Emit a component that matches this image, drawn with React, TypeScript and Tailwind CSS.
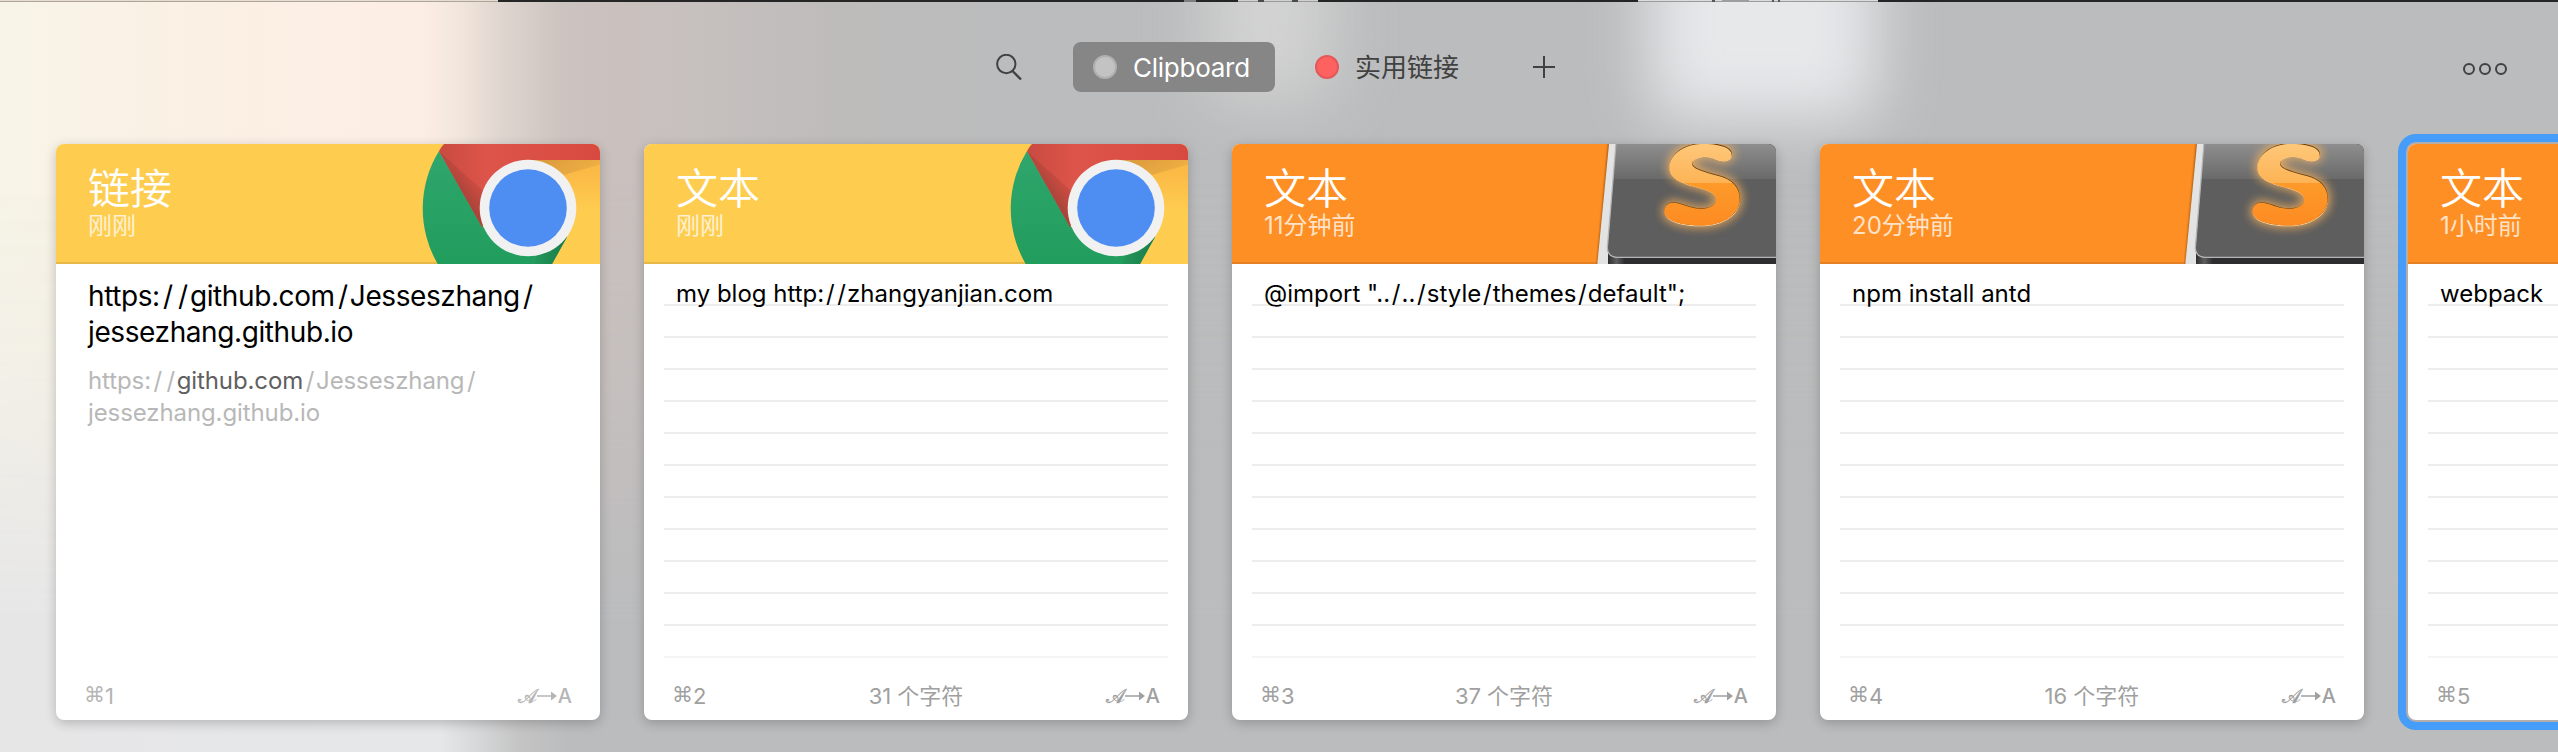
import React from "react";

type Source = "chrome" | "sublime";

interface Clip {
  kind: string;
  time: string;
  app: Source;
  text: string;
  count?: string;
  link?: boolean;
  selected?: boolean;
}

const clips: Clip[] = [
  { kind: "链接", time: "刚刚", app: "chrome", text: "", link: true },
  { kind: "文本", time: "刚刚", app: "chrome", text: "my blog http://zhangyanjian.com", count: "31 个字符" },
  { kind: "文本", time: "11分钟前", app: "sublime", text: '@import "../../style/themes/default";', count: "37 个字符" },
  { kind: "文本", time: "20分钟前", app: "sublime", text: "npm install antd", count: "16 个字符" },
  { kind: "文本", time: "1小时前", app: "sublime", text: "webpack", selected: true },
];

function ChromeArt() {
  return (
    <svg className="block h-[120px] w-[180px] shrink-0" viewBox="0 0 180 120" fill="none">
      <defs>
        <linearGradient id="cg" x1="0" y1="0" x2="0" y2="1">
          <stop offset="0" stopColor="#2fa66d" />
          <stop offset="1" stopColor="#219d5d" />
        </linearGradient>
        <linearGradient id="cr" gradientUnits="userSpaceOnUse" x1="38" y1="46" x2="62" y2="28">
          <stop offset="0" stopColor="#a9443a" />
          <stop offset="0.5" stopColor="#c54a40" />
          <stop offset="1" stopColor="#d95147" />
        </linearGradient>
        <linearGradient id="cr2" x1="0" y1="0" x2="1" y2="0">
          <stop offset="0" stopColor="#c94b41" />
          <stop offset="0.3" stopColor="#dd544a" />
          <stop offset="1" stopColor="#d84a3f" />
        </linearGradient>
        <linearGradient id="cy" x1="0" y1="0" x2="0" y2="1">
          <stop offset="0.1" stopColor="#fbb945" />
          <stop offset="0.5" stopColor="#fecd50" />
        </linearGradient>
        <linearGradient id="cs" x1="0" y1="0" x2="1" y2="0.3">
          <stop offset="0" stopColor="#d8963a" />
          <stop offset="1" stopColor="#eeaf44" />
        </linearGradient>
        <linearGradient id="cd" x1="0" y1="0" x2="1" y2="0">
          <stop offset="0" stopColor="#22985b" />
          <stop offset="1" stopColor="#1b7a4a" />
        </linearGradient>
      </defs>
      <path d="M108 16H180V120H132L150 88Z" fill="url(#cy)" />
      <path d="M108 16H180V20.500L144 31Z" fill="url(#cs)" />
      <path d="M17.700 120A110 110 0 0 1 19 7L63 83L108 100L147 93L132 120Z" fill="url(#cg)" />
      <path d="M114 120L122 100L147 93L132 120Z" fill="url(#cd)" />
      <path d="M19 7Q21 3 24 0H180V16H108L62 83Z" fill="url(#cr2)" />
      <path d="M19 7L62 83L80 62Z" fill="url(#cr)" />
      <circle cx="108" cy="64" r="48.300" fill="#f1f1f1" />
      <circle cx="108" cy="64" r="38.800" fill="#4e8ef3" />
    </svg>
  );
}

function SublimeArt() {
  const s =
    "M424 58C424 36 385 25 340 25C275 25 237 62 237 97C237 128 268 141 305 152C345 163 377 171 377 193C377 213 355 221 331 221C295 221 275 203 248 203C230 203 222 217 222 232C226 262 285 272 330 272C400 272 448 236 448 192C448 150 418 128 370 118C335 108 305 100 305 85C305 70 325 64 345 64C367 64 380 77 400 77C415 77 424 68 424 58Z";
  return (
    <svg className="block h-[120px] w-[180px] shrink-0" viewBox="0 0 180 120" fill="none">
      <defs>
        <linearGradient id="sk" x1="0" y1="0" x2="0" y2="1">
          <stop offset="0" stopColor="#8e8e8e" />
          <stop offset="1" stopColor="#6a6a6a" />
        </linearGradient>
        <linearGradient id="so" gradientUnits="userSpaceOnUse" x1="0" y1="25" x2="0" y2="272">
          <stop offset="0" stopColor="#fec87a" />
          <stop offset="0.475" stopColor="#fdb355" />
          <stop offset="0.48" stopColor="#fd9a2a" />
          <stop offset="1" stopColor="#fd8b22" />
        </linearGradient>
        <linearGradient id="sb" x1="0" y1="0" x2="1" y2="0">
          <stop offset="0" stopColor="#2f2f30" />
          <stop offset="0.05" stopColor="#5e5e60" />
          <stop offset="0.1" stopColor="#2d2d2f" />
        </linearGradient>
        <filter id="sg" x="-50%" y="-50%" width="200%" height="200%">
          <feGaussianBlur stdDeviation="14" />
        </filter>
        <filter id="ss" x="-100%" y="-20%" width="300%" height="140%">
          <feGaussianBlur stdDeviation="1.300" />
        </filter>
      </defs>
      <path d="M12.500 -4L0.500 124H8L20 -4Z" fill="#6b3a0c" opacity="0.7" filter="url(#ss)" />
      <path d="M13 0H180V120H1.300Z" fill="#e3e3e3" />
      <path d="M20 0H180V120H12V104Z" fill="url(#sb)" />
      <path d="M20.500 0H180V113H21Q11 112 11.500 104Z" fill="#5e5e5e" />
      <path d="M20.500 0H180V35H17.500Z" fill="url(#sk)" />
      <path d="M20 0L11.300 104Q12 113 21 113.300H180" stroke="#b5b5b5" strokeWidth="1.300" />
      <g transform="translate(-5.300 -9) scale(0.3333)">
        <path d={s} fill="#ffb65c" stroke="#ffb65c" strokeWidth="16" opacity="0.75" filter="url(#sg)" />
        <path d={s} fill="#ffd7a4" transform="translate(0 2)" />
        <path d={s} fill="#6b3c08" transform="translate(0 -1)" />
        <path d={s} fill="url(#so)" transform="translate(-1 2) scale(1 0.992)" />
      </g>
    </svg>
  );
}

function PlainTextMark() {
  return (
    <span className="flex items-center leading-none">
      <span className="font-['DejaVu_Sans','DejaVu_Serif',serif] text-[20px] [-webkit-text-stroke:0.4px_currentColor]">
        𝒜
      </span>
      <svg className="mr-px h-2.5 w-5" viewBox="0 0 20 10" fill="currentColor">
        <path d="M0 4.300H14V0.500L20 5L14 9.500V5.700H0Z" />
      </svg>
      <span className="text-[20px] font-medium">A</span>
    </span>
  );
}

/** Renders a string with extra room on both sides of each slash. */
function Spaced({ text, slash }: { text: string; slash: string }) {
  return (
    <>
      {text.split(/(\/)/).map((part, i) =>
        part === "/" ? (
          <span key={i} className={slash}>
            {part}
          </span>
        ) : (
          part
        ),
      )}
    </>
  );
}

function RuledLines() {
  return (
    <div className="absolute inset-x-5 top-10 flex flex-col gap-[30px]">
      {Array.from({ length: 12 }, (_, i) => (
        <div key={i} className={i === 11 ? "h-0.5 bg-[#f5f5f5]" : "h-0.5 bg-[#ededed]"} />
      ))}
    </div>
  );
}

function ClipCard({ clip, index }: { clip: Clip; index: number }) {
  const chrome = clip.app === "chrome";
  return (
    <article
      className={
        "flex h-[576px] w-[544px] shrink-0 flex-col rounded-lg bg-white " +
        (clip.selected
          ? "shadow-[0_0_0_2px_#b3aeac,0_0_0_10px_#459df9]"
          : "shadow-[0_3px_12px_rgba(0,0,0,0.22)]")
      }
    >
      <header
        className={
          "relative flex h-[120px] justify-between overflow-hidden rounded-t-lg " +
          (chrome ? "bg-[#fecd50]" : "bg-[#fe8f25]")
        }
      >
        <div className={"absolute inset-x-0 bottom-0 h-0.5 " + (chrome ? "bg-[#e5b848]" : "bg-[#e58122]")} />
        <div className="pt-[21px] pl-8 text-white">
          <h2 className="text-[42px] leading-[48px] font-[350]">{clip.kind}</h2>
          <p className="text-[24px] leading-[26px] text-white/75">{clip.time}</p>
        </div>
        <div className="relative">{chrome ? <ChromeArt /> : <SublimeArt />}</div>
      </header>
      {clip.link ? (
        <div className="flex-1 px-8 pt-[14px] text-black">
          <p className="text-[28px] leading-9 tracking-[-0.4px] whitespace-nowrap">
            <Spaced text="https://github.com/Jesseszhang/" slash="pl-[3.2px] pr-[2.2px]" />
            <br />
            jessezhang.github.io
          </p>
          <p className="mt-[15px] text-[24px] leading-8 tracking-[-0.1px] whitespace-nowrap text-[#b8b8b8]">
            <Spaced text="https://" slash="pl-[2.6px] pr-[1.7px]" />
            <span className="text-[#606060]">github.com</span>
            <Spaced text="/Jesseszhang/" slash="pl-[2.6px] pr-[1.7px]" />
            <br />
            jessezhang.github.io
          </p>
        </div>
      ) : (
        <div className="relative flex-1 px-8 pt-[14px] text-black">
          <RuledLines />
          <p className="relative text-[24px] leading-8 whitespace-nowrap">
            <Spaced text={clip.text} slash="pl-[1.7px] pr-[1.1px]" />
          </p>
        </div>
      )}
      <footer
        className={
          "grid h-[48px] grid-cols-3 items-center pr-7 pl-[28px] text-[22px] " +
          (clip.link ? "text-[#b5b5b5]" : "text-[#a0a0a0]")
        }
      >
        <span className="flex items-center">
          <span className="font-['DejaVu_Sans',sans-serif] text-[21px]">⌘</span>
          {index + 1}
        </span>
        <span className="text-center whitespace-nowrap">{clip.count}</span>
        {!clip.selected && (
          <span className="flex justify-end">
            <PlainTextMark />
          </span>
        )}
      </footer>
    </article>
  );
}

function WindowEdge() {
  return (
    <div className="flex h-0.5 w-full bg-[#262525]">
      <div className="h-0.5 w-[498px] border-b border-[#ada49a] bg-[#e6dcd0]" />
      <div className="ml-[686px] h-0.5 w-3 bg-[#7d7d7d]" />
      <div className="ml-[42px] flex h-0.5 w-20 border-b border-[#9b9b9b] bg-[#d0d0d0]">
        <div className="ml-5 h-0.5 w-1.5 bg-[#4a4a4a]" />
        <div className="ml-7 h-0.5 w-1.5 bg-[#4a4a4a]" />
      </div>
      <div className="ml-[320px] flex h-0.5 w-60 border-b border-[#9b9b9b] bg-[#dcdcdc]">
        <div className="ml-[74px] h-0.5 w-[3px] bg-[#555555]" />
        <div className="ml-[7px] h-0.5 w-[27px] bg-[#9d9d9d]" />
        <div className="ml-[23px] h-0.5 w-0.5 bg-[#555555]" />
        <div className="ml-1 h-0.5 w-0.5 bg-[#555555]" />
      </div>
    </div>
  );
}

function Toolbar() {
  return (
    <nav className="flex h-[130px] items-center pl-[996px] text-[#414141]">
      <svg className="size-[26px]" viewBox="0 0 26 26" fill="none" stroke="currentColor" strokeWidth="2">
        <circle cx="10.300" cy="10" r="9.200" />
        <path d="M16.500 17L25 25.500" strokeWidth="2.300" />
      </svg>
      <div className="ml-[51px] flex h-[50px] w-[202px] items-center rounded-lg bg-[#868686] pl-5 text-white">
        <span className="size-6 rounded-full border-2 border-[#b0b0b0] bg-[#c3c3c3]" />
        <span className="ml-[16px] text-[26px] tracking-[-0.25px]">Clipboard</span>
      </div>
      <span className="ml-10 size-6 rounded-full border-2 border-[#e45857] bg-[#fd6260]" />
      <span className="ml-4 w-[105px] pt-px text-[26px] whitespace-nowrap">实用链接</span>
      <svg className="ml-[73px] size-[22px]" viewBox="0 0 22 22" stroke="currentColor" strokeWidth="2">
        <path d="M11 0V22M0 11H22" />
      </svg>
      <div className="ml-auto flex gap-1 pt-1 pr-[51px]">
        <span className="size-3 rounded-full border-2 border-current" />
        <span className="size-3 rounded-full border-2 border-current" />
        <span className="size-3 rounded-full border-2 border-current" />
      </div>
    </nav>
  );
}

export default function App() {
  return (
    <div className="relative isolate h-[752px] w-[2558px] overflow-hidden bg-[#bbbcbd] font-['Inter','Noto_Sans_CJK_SC',sans-serif]">
      <div className="absolute inset-0 -z-10 bg-[linear-gradient(90deg,#f7f4e7_0px,#fbf0e4_200px,#fdeee5_420px,#f2e6dc_460px,#e0d6d0_500px,#ccc4c0_560px,#cac1be_610px,#c6c0be_700px,#bebcbb_830px,#bbbcbd_1000px)]" />
      <div className="absolute inset-0 -z-10 bg-[linear-gradient(90deg,#e6e6e7_0px,#e6e7e9_440px,#d6d7d9_480px,#c4c4c4_520px,#bbbcbe_570px,#bbbcbd_1000px)] mask-[linear-gradient(180deg,transparent_180px,rgba(0,0,0,0.3)_380px,black_620px)]" />
      <div className="absolute top-[-90px] left-[1210px] -z-10 h-[190px] w-[120px] bg-[#dadada]/80 blur-[34px]" />
      <div className="absolute top-[-110px] left-[1650px] -z-10 h-[230px] w-[226px] rounded-[20px] bg-[#e6e8ea] blur-[32px]" />
      <WindowEdge />
      <Toolbar />
      <main className="flex gap-11 pt-3 pl-14">
        {clips.map((clip, i) => (
          <ClipCard key={i} clip={clip} index={i} />
        ))}
      </main>
    </div>
  );
}
